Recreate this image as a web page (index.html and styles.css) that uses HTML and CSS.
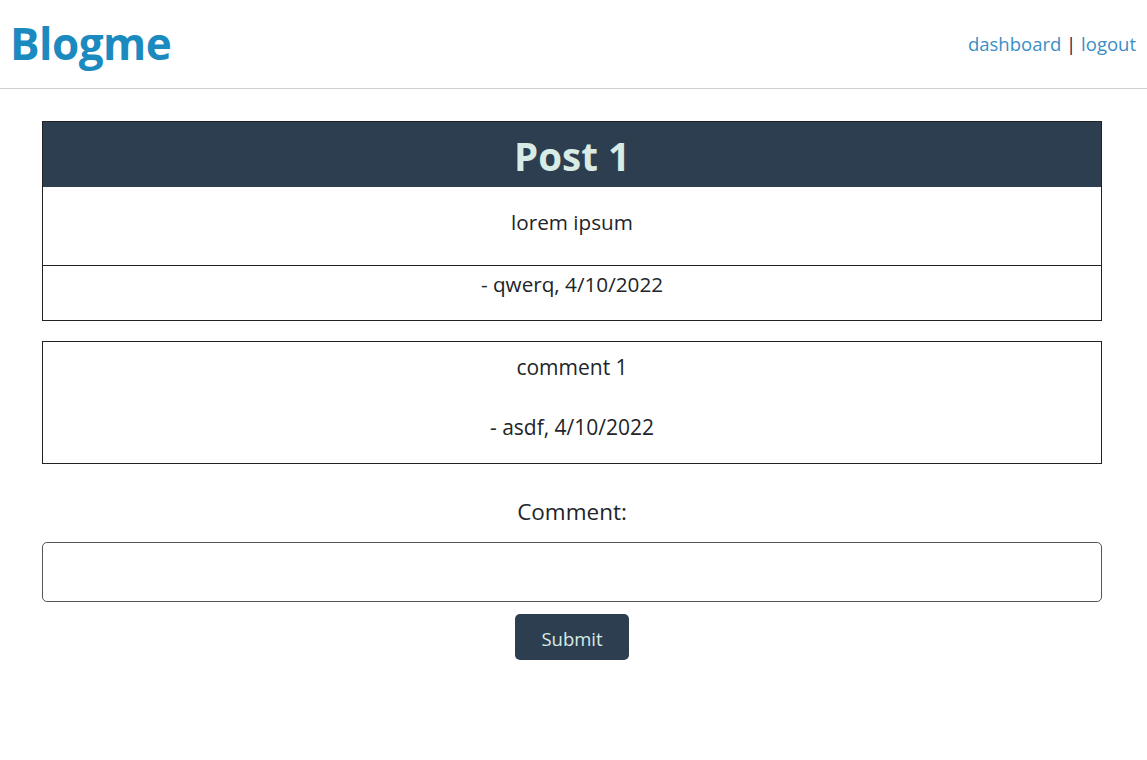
FILE: index.html
```html
<!DOCTYPE html>
<html lang="en">
<head>
<meta charset="utf-8">
<title>Blogme</title>
<link rel="stylesheet" href="styles.css">
</head>
<body>
<header class="site-header">
  <h1 class="brand">Blogme</h1>
  <nav class="nav"><a href="#">dashboard</a> | <a href="#">logout</a></nav>
</header>
<main class="main">
  <article class="post">
    <h2 class="post-title">Post 1</h2>
    <div class="post-body">lorem ipsum</div>
    <div class="post-meta">- qwerq, 4/10/2022</div>
  </article>
  <section class="comment">
    <p class="comment-text">comment 1</p>
    <p class="comment-meta">- asdf, 4/10/2022</p>
  </section>
  <form class="comment-form">
    <label class="comment-label" for="c">Comment:</label>
    <input class="comment-input" id="c" type="text">
    <button class="submit" type="button">Submit</button>
  </form>
</main>
</body>
</html>
```
FILE: styles.css
```css
html, body { margin: 0; padding: 0; background: #fff; }
body {
  font-family: "Open Sans", "Noto Sans", sans-serif;
  color: #212529;
}
.site-header {
  display: flex;
  justify-content: space-between;
  align-items: center;
  height: 88px;
  padding: 0 11px 0 10px;
  border-bottom: 1px solid #d0d0d0;
}
.brand {
  margin: 0 0 2px;
  font-size: 44px;
  font-weight: 700;
  color: #1b8abf;
  letter-spacing: -0.5px;
}
.nav {
  font-size: 18.5px;
  color: #0d1f4f;
  margin-bottom: 2px;
}
.nav a { color: #3a8ec5; text-decoration: none; }
.main {
  padding: 32px 45px 0 42px;
  display: flex;
  flex-direction: column;
}
.post {
  border: 1px solid #222;
  text-align: center;
}
.post-title {
  margin: 0;
  height: 65px;
  line-height: 69px;
  background: #2d3e50;
  color: #d8ebe5;
  font-size: 38.5px;
  font-weight: 700;
}
.post-body {
  font-size: 20.7px;
  line-height: 28px;
  padding: 21px 0 29px;
  border-bottom: 1px solid #222;
}
.post-meta {
  font-size: 20.7px;
  line-height: 28px;
  padding: 4px 0 22px;
}
.comment {
  margin-top: 20px;
  border: 1px solid #222;
  text-align: center;
  padding: 11px 0 22px;
  font-size: 21px;
  line-height: 28px;
}
.comment p { margin: 0; }
.comment-meta { margin-top: 32px !important; }
.comment-form {
  display: flex;
  flex-direction: column;
  align-items: center;
  margin-top: 33px;
}
.comment-label {
  font-size: 22.5px;
  line-height: 30px;
  margin-bottom: 15px;
}
.comment-input {
  box-sizing: border-box;
  width: 100%;
  height: 60px;
  border: 1px solid #555;
  border-radius: 5px;
  margin: 0 0 12px;
}
.submit {
  box-sizing: border-box;
  width: 114px;
  height: 46px;
  padding-top: 3px;
  background: #2d3e50;
  color: #d8ebe5;
  border: none;
  border-radius: 5px;
  font-family: inherit;
  font-size: 18.5px;
}
```
